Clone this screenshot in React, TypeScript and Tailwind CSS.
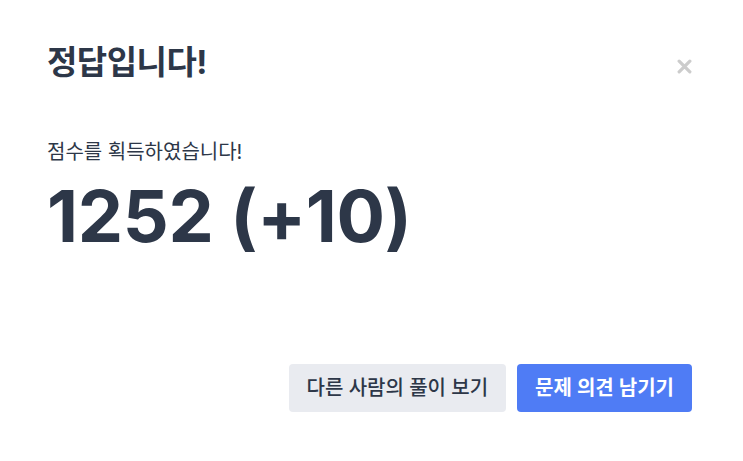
import React from "react";

export default function App() {
  const font = { fontFamily: 'Inter, "Noto Sans CJK KR", sans-serif' };
  return (
    <div className="w-[743px] h-[461px] bg-white text-[#2d3748]" style={font}>
      <div className="flex flex-col h-full pl-[47px] pr-[51px] pt-[40px] pb-[49px]">
        <div className="flex items-start justify-between">
          <h2 className="text-[33px] leading-[44px] font-bold tracking-[-0.5px]">정답입니다!</h2>
          <button className="mt-[19px] text-[#cccccc]">
            <svg width="15" height="15" viewBox="0 0 14 14">
              <path d="M2 2 L12 12 M12 2 L2 12" stroke="currentColor" strokeWidth="3" strokeLinecap="round" />
            </svg>
          </button>
        </div>

        <p className="mt-[54px] text-[20px] leading-7">점수를 획득하였습니다!</p>
        <p className="mt-[10px] text-[72px] leading-[80px] font-bold tracking-[-0.3px]">1252 (+10)</p>

        <div className="mt-auto flex justify-end gap-[11px]">
          <button className="h-12 px-[18px] rounded bg-[#e9ebf0] text-[#2d3748] text-[20px] font-medium">
            다른 사람의 풀이 보기
          </button>
          <button className="h-12 px-[18px] rounded bg-[#4f7cf5] text-white text-[20px] font-semibold">
            문제 의견 남기기
          </button>
        </div>
      </div>
    </div>
  );
}
